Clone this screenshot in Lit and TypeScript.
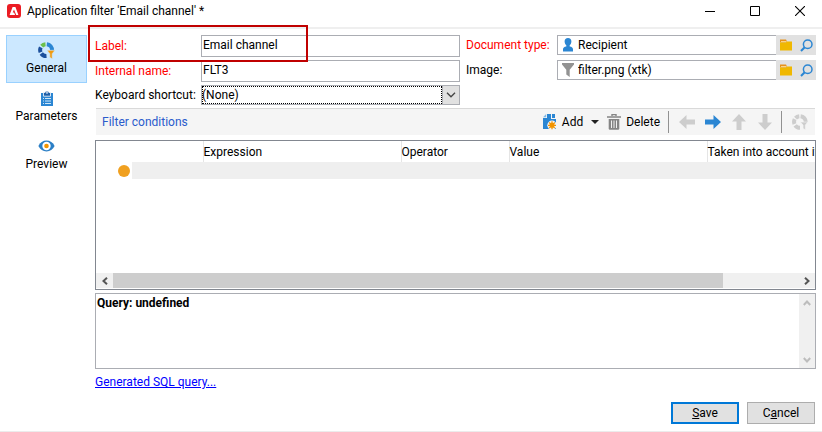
import { LitElement, html, css, svg } from "lit";
import { customElement, property, state } from "lit/decorators.js";
import { classMap } from "lit/directives/class-map.js";

const icons = {
  logo: svg`<svg width="14" height="14" viewBox="0 0 14 14"><rect width="14" height="14" rx="3" fill="#eb1c24"/><path d="M5.6 3h2.8L11.4 11H9.2L7 5.4 5.7 8.6h1.4L8.1 11H2.6z" fill="#fff"/></svg>`,
  general: svg`<svg width="17" height="17" viewBox="0 0 17 17"><g fill="none" stroke-width="4"><path d="M7.500 2.300A5.800 5.800 0 0 0 3.700 4.200" stroke="#6cc04a"/><path d="M2.800 5.300A5.800 5.800 0 0 0 2.600 10.200M3.300 11.500A5.800 5.800 0 0 0 8.500 14" stroke="#1b4f9c"/><path d="M8.800 2.300A5.800 5.800 0 0 1 14 8.500" stroke="#2b86d3"/></g><path d="M9 8.300h8l-2.800 3.400V17l-2.400-1.700v-3.600z" fill="#f29a0c" stroke="#cce8ff" stroke-width=".6"/></svg>`,
  parameters: svg`<svg width="14" height="17" viewBox="0 0 14 17"><path d="M1 3h12v13H1z" fill="#2b86d3"/><path d="M3.500 2.400h1.600a2 2 0 0 1 3.800 0h1.600v3.800h-7z" fill="#1d5fa8" stroke="#fff" stroke-width=".8"/><circle cx="7" cy="2.900" r=".8" fill="#fff"/><path d="M3 8.500h1m1 0h6M3 11h1m1 0h6M3 13.500h1m1 0h6" stroke="#cfe6f8"/></svg>`,
  preview: svg`<svg width="17" height="12" viewBox="0 0 17 12"><path d="M0.400 6C2 2.600 5 .6 8.500 .6S15 2.600 16.600 6C15 9.400 12 11.400 8.500 11.400S2 9.400 .4 6z" fill="#2b7fc6"/><circle cx="8.500" cy="6" r="4.200" fill="#fff"/><circle cx="8.500" cy="6" r="2.300" fill="#f29400"/></svg>`,
  person: svg`<svg width="12" height="16" viewBox="0 0 12 16"><path d="M6 1c2.200 0 3.400 1.400 3.400 3.400S8.300 7.500 7.700 8.200v1.300c2.100.2 3.300 1.300 3.300 3V14.500H1v-2c0-1.700 1.200-2.800 3.300-3V8.200C3.700 7.500 2.600 6.400 2.600 4.400S3.800 1 6 1z" fill="#2b86d3"/></svg>`,
  funnel: svg`<svg width="12" height="14" viewBox="0 0 12 14"><path d="M0 0h12v1.500L7.700 6.800V14L4.300 11.600V6.800L0 1.500z" fill="#929292"/></svg>`,
  folder: svg`<svg width="12" height="12" viewBox="0 0 12 12"><path d="M0 .5h6l1 2v1H0z" fill="#e8921a"/><path d="M0 3.500h6l1-1h5v9H0z" fill="#f0b800"/><path d="M1 2.500h5.500" stroke="#fbe3a8" stroke-width=".8"/></svg>`,
  search: svg`<svg width="13" height="13" viewBox="0 0 13 13"><circle cx="7.700" cy="5.200" r="4.300" fill="none" stroke="#2b86d3" stroke-width="1.500"/><path d="M4.700 8.200L1 12" stroke="#2b86d3" stroke-width="2"/></svg>`,
  add: svg`<svg width="14" height="16" viewBox="0 0 14 16"><path d="M4 0H8v5h5v10H0V4h4z" fill="#2b86d3"/><path d="M9 0h3v4H9z" fill="#2b86d3"/><path d="M0 3.300L3.200 0v3.300z" fill="#7db7e6"/><circle cx="9" cy="11.300" r="4.700" fill="#f5f5f5"/><path d="M9 7.300v8M5 11.300h8M6.200 8.500l5.600 5.600M11.800 8.500l-5.600 5.600" stroke="#f29400" stroke-width="1.300"/><circle cx="9" cy="11.300" r="2.500" fill="#f29400"/></svg>`,
  trash: svg`<svg width="14" height="16" viewBox="0 0 14 16"><path d="M5 2V.6h4V2M0 3h14" fill="none" stroke="#858585" stroke-width="1.400"/><path d="M1.700 5h10.600v9.500a1.200 1.200 0 0 1-1.200 1.200H2.900a1.200 1.200 0 0 1-1.200-1.200z" fill="#858585"/><path d="M4.500 6.500v7.500M7 6.500v7.500M9.500 6.500v7.500" stroke="#f0f0f0"/></svg>`,
  arrow: svg`<svg width="16" height="16" viewBox="0 0 16 16"><path d="M0 5.500h8.500V1L16 8l-7.500 7v-4.500H0z" fill="currentColor"/></svg>`,
  preset: svg`<svg width="16" height="16" viewBox="0 0 16 16"><g fill="none" stroke="#cdcdcd" stroke-width="4"><path d="M7.300 2.200A5.800 5.800 0 0 0 3.500 4.100M2.700 5.200A5.800 5.800 0 0 0 2.500 10M3.200 11.300A5.800 5.800 0 0 0 8 13.800M8.600 2.200A5.800 5.800 0 0 1 13.700 8"/></g><path d="M8.400 8.100h7.400l-2.500 3v4.700l-2.200-1.400v-3.300z" fill="#cdcdcd" stroke="#f5f5f5" stroke-width=".6"/></svg>`,
  chevron: svg`<svg width="10" height="6" viewBox="0 0 10 6"><path d="M1 .8l4 4 4-4" fill="none" stroke="currentColor" stroke-width="1.300"/></svg>`,
  scroll: svg`<svg width="8" height="8" viewBox="0 0 8 8"><path d="M6 .8L2.500 4 6 7.200" fill="none" stroke="currentColor" stroke-width="2"/></svg>`,
  minimize: svg`<svg width="10" height="10" viewBox="0 0 10 10"><path d="M0 5.500h10" stroke="#000"/></svg>`,
  maximize: svg`<svg width="10" height="10" viewBox="0 0 10 10"><path d="M.5 .5h9v9h-9z" fill="none" stroke="#000"/></svg>`,
  close: svg`<svg width="10" height="10" viewBox="0 0 10 10"><path d="M0 0l10 10M10 0L0 10" stroke="#000" stroke-width="1.100"/></svg>`,
};

const base = css`
  * { box-sizing: border-box; }
  svg { display: block; flex: none; }
  button, input, select {
    font: inherit; color: inherit; margin: 0; padding: 0;
    border: 0; border-radius: 0; background: none; outline: none;
  }
  button { display: flex; align-items: center; justify-content: center; white-space: nowrap; }
`;

@customElement("link-field")
class LinkField extends LitElement {
  @property() label = "";
  @property() value = "";
  @property() kind: "person" | "funnel" = "person";
  @property({ type: Boolean }) required = false;

  static styles = [base, css`
    :host { display: flex; height: 20px; align-items: center; }
    .label { width: 91px; flex: none; white-space: nowrap; }
    .required { color: #ff0000; }
    .box {
      flex: 1; min-width: 0; height: 20px; display: flex; align-items: center;
      border: 1px solid #abadb3; border-right: 0; background: #fff;
    }
    .icon { width: 20px; flex: none; display: flex; justify-content: center; }
    .value { flex: 1; min-width: 0; height: 18px; }
    .tools { display: flex; height: 20px; background: #e1e1e1; }
    .tool { width: 20px; height: 20px; }
  `];

  render() {
    return html`
      <label for="value" class=${classMap({ label: true, required: this.required })}>${this.label}</label>
      <div class="box">
        <span class="icon">${icons[this.kind]}</span>
        <input id="value" class="value" type="text" .value=${this.value} />
      </div>
      <div class="tools">
        <button class="tool" aria-label="Open folder">${icons.folder}</button>
        <button class="tool" aria-label="Search">${icons.search}</button>
      </div>`;
  }
}

@customElement("app-root")
class AppRoot extends LitElement {
  @state() private section = "General";

  private sections = [
    { name: "General", icon: icons.general },
    { name: "Parameters", icon: icons.parameters },
    { name: "Preview", icon: icons.preview },
  ];

  static styles = [base, css`
    :host {
      display: flex; flex-direction: column; min-height: 100vh; box-sizing: border-box;
      background: #fff; color: #000; border-bottom: 1px solid #ececec;
      font: 12px/16px Roboto, "Open Sans", sans-serif;
    }
    .titlebar {
      display: flex; align-items: center; height: 29px; padding: 0 0 6px 7px;
      gap: 6px; border-bottom: 2px solid #efefef; flex: none;
    }
    .title { flex: 1; margin: 0; font: inherit; white-space: nowrap; }
    .controls { display: flex; }
    .control { width: 45px; height: 22px; }
    .body { flex: 1; display: flex; padding: 6px 6px 0; gap: 8px; }
    .nav { width: 81px; flex: none; display: flex; flex-direction: column; }
    .section {
      flex-direction: column; justify-content: flex-start; gap: 1px; height: 48px; padding-top: 5px;
      border: 1px solid transparent;
    }
    .section .glyph { height: 18px; display: flex; align-items: center; }
    .section.active { background: #cce8ff; border-color: #99d1ff; }
    .main { flex: 1; min-width: 0; display: flex; flex-direction: column; }
    .form { display: grid; grid-template-columns: minmax(0, 365fr) minmax(0, 350fr); column-gap: 6px; position: relative; }
    .column { display: flex; flex-direction: column; gap: 3px; }
    .column.links { gap: 5px; }
    .field { display: flex; align-items: center; }
    .label { width: 106px; flex: none; white-space: nowrap; }
    .required { color: #ff0000; }
    .text { flex: 1; min-width: 0; height: 22px; padding: 0 1px 2px; border: 1px solid #abadb3; background: #fff; }
    .callout {
      position: absolute; left: -7px; top: -10px; width: 220px; height: 37px;
      border: 2px solid #c00000; pointer-events: none;
    }
    .combo {
      flex: 1; min-width: 0; height: 20px; border: 1px solid #abadb3; display: grid;
      grid-template-columns: 1fr 17px; grid-template-rows: 18px;
    }
    .select { grid-area: 1 / 1 / 2 / 3; appearance: none; padding: 0 18px 0 0; height: 18px; }
    .focus { grid-area: 1 / 1; border: 1px dotted #000; pointer-events: none; }
    .drop {
      grid-area: 1 / 2; background: #e1e1e1; border-left: 1px solid #abadb3; color: #444;
      display: flex; align-items: center; justify-content: center; pointer-events: none;
    }
    .toolbar {
      display: flex; align-items: center; height: 27px; margin: 3px 1px 5px; padding: 0 7px 0 6px;
      background: #f5f5f5; border-top: 1px solid #d9d9d9;
    }
    .heading { flex: 1; margin: 0; font: inherit; color: #2a5bcc; }
    .action { height: 24px; gap: 5px; }
    .more { width: 24px; height: 24px; }
    .caret { border: 4px solid transparent; border-top-color: #222; border-bottom: 0; }
    .divider { width: 1px; height: 22px; background: #919191; margin: 0 10px 0 8px; }
    .moves { display: flex; gap: 10px; }
    .move { width: 16px; height: 24px; color: #cdcdcd; }
    .move.on { color: #2b86d3; }
    .left svg { transform: rotate(180deg); }
    .up svg { transform: rotate(-90deg); }
    .down svg { transform: rotate(90deg); }
    .list {
      flex: 1; min-height: 150px; border: 1px solid #828790; display: flex; flex-direction: column;
      padding-bottom: 1px;
    }
    .viewport { flex: 1; overflow: hidden; }
    .grid { width: 800px; min-width: 100%; table-layout: fixed; border-collapse: collapse; }
    .grid th { height: 21px; padding: 0; text-align: left; font-weight: 400; border-left: 1px solid #e5e5e5; }
    .grid th.blank { border-left: 0; }
    .grid td { height: 17px; padding: 0; background: #efefef; }
    .grid td.mark { background: #fff; padding-left: 22px; }
    .gutter { width: 36px; }
    .lead { width: 71px; }
    .narrow { width: 108px; }
    .wide { width: 198px; }
    .dot { display: block; width: 12px; height: 12px; border-radius: 50%; background: #f0a020; }
    .hscroll { display: flex; height: 15px; background: #f0f0f0; color: #555; }
    .step { width: 17px; height: 15px; }
    .track { flex: 1; }
    .thumb { width: 89%; height: 15px; background: #cdcdcd; }
    .forward svg { transform: rotate(180deg); }
    .query { height: 76px; margin-top: 3px; border: 1px solid #abadb3; display: flex; }
    .message { flex: 1; margin: 0; padding: 1px; font-weight: 700; }
    .vscroll {
      width: 16px; background: #f0f0f0; color: #bdbdbd; display: flex;
      flex-direction: column; justify-content: space-between;
    }
    .vscroll .step { width: 16px; height: 17px; }
    .vscroll .back svg { transform: rotate(90deg); }
    .vscroll .forward svg { transform: rotate(-90deg); }
    .sql { align-self: flex-start; margin-top: 5px; color: #0000ff; }
    .footer { display: flex; justify-content: flex-end; gap: 8px; padding: 12px 1px 7px; }
    .push { width: 68px; height: 22px; background: #e1e1e1; border: 1px solid #adadad; }
    .push.default { border: 2px solid #0078d7; }
  `];

  render() {
    return html`
      <header class="titlebar">
        ${icons.logo}
        <h1 class="title">Application filter 'Email channel' *</h1>
        <div class="controls">
          <button class="control" aria-label="Minimize">${icons.minimize}</button>
          <button class="control" aria-label="Maximize">${icons.maximize}</button>
          <button class="control" aria-label="Close">${icons.close}</button>
        </div>
      </header>
      <div class="body">
        <nav class="nav">
          ${this.sections.map((s) => html`
            <button class=${classMap({ section: true, active: this.section === s.name })}
              @click=${() => (this.section = s.name)}>
              <span class="glyph">${s.icon}</span><span>${s.name}</span>
            </button>`)}
        </nav>
        <main class="main">
          <div class="form">
            <div class="column">
              <div class="field">
                <label class="label required" for="label">Label:</label>
                <input class="text" id="label" type="text" value="Email channel" />
              </div>
              <div class="field">
                <label class="label required" for="name">Internal name:</label>
                <input class="text" id="name" type="text" value="FLT3" />
              </div>
              <div class="field">
                <label class="label" for="shortcut">Keyboard shortcut:</label>
                <div class="combo">
                  <select class="select" id="shortcut"><option>(None)</option></select>
                  <span class="focus"></span>
                  <span class="drop">${icons.chevron}</span>
                </div>
              </div>
            </div>
            <div class="column links">
              <link-field label="Document type:" value="Recipient" kind="person" required></link-field>
              <link-field label="Image:" value="filter.png (xtk)" kind="funnel"></link-field>
            </div>
            <div class="callout"></div>
          </div>
          <div class="toolbar">
            <h2 class="heading">Filter conditions</h2>
            <button class="action">${icons.add}Add</button>
            <button class="more" aria-label="More ways to add"><span class="caret"></span></button>
            <button class="action">${icons.trash}Delete</button>
            <span class="divider"></span>
            <div class="moves">
              <button class="move left" aria-label="Move left">${icons.arrow}</button>
              <button class="move on" aria-label="Move right">${icons.arrow}</button>
              <button class="move up" aria-label="Move up">${icons.arrow}</button>
              <button class="move down" aria-label="Move down">${icons.arrow}</button>
            </div>
            <span class="divider"></span>
            <button class="move" aria-label="Predefined filters">${icons.preset}</button>
          </div>
          <div class="list">
            <div class="viewport">
              <table class="grid">
                <colgroup>
                  <col class="gutter" /><col class="lead" /><col class="wide" />
                  <col class="narrow" /><col class="wide" /><col />
                </colgroup>
                <thead>
                  <tr>
                    <th class="blank" colspan="2"></th>
                    <th>Expression</th><th>Operator</th><th>Value</th><th>Taken into account if</th>
                  </tr>
                </thead>
                <tbody>
                  <tr><td class="mark"><span class="dot"></span></td><td colspan="5"></td></tr>
                </tbody>
              </table>
            </div>
            <div class="hscroll">
              <button class="step" aria-label="Scroll left">${icons.scroll}</button>
              <div class="track"><div class="thumb"></div></div>
              <button class="step forward" aria-label="Scroll right">${icons.scroll}</button>
            </div>
          </div>
          <div class="query">
            <p class="message">Query: undefined</p>
            <div class="vscroll">
              <button class="step back" aria-label="Scroll up">${icons.scroll}</button>
              <button class="step forward" aria-label="Scroll down">${icons.scroll}</button>
            </div>
          </div>
          <a class="sql" href="#sql">Generated SQL query...</a>
          <footer class="footer">
            <button class="push default"><span><u>S</u>ave</span></button>
            <button class="push"><span>C<u>a</u>ncel</span></button>
          </footer>
        </main>
      </div>`;
  }
}
